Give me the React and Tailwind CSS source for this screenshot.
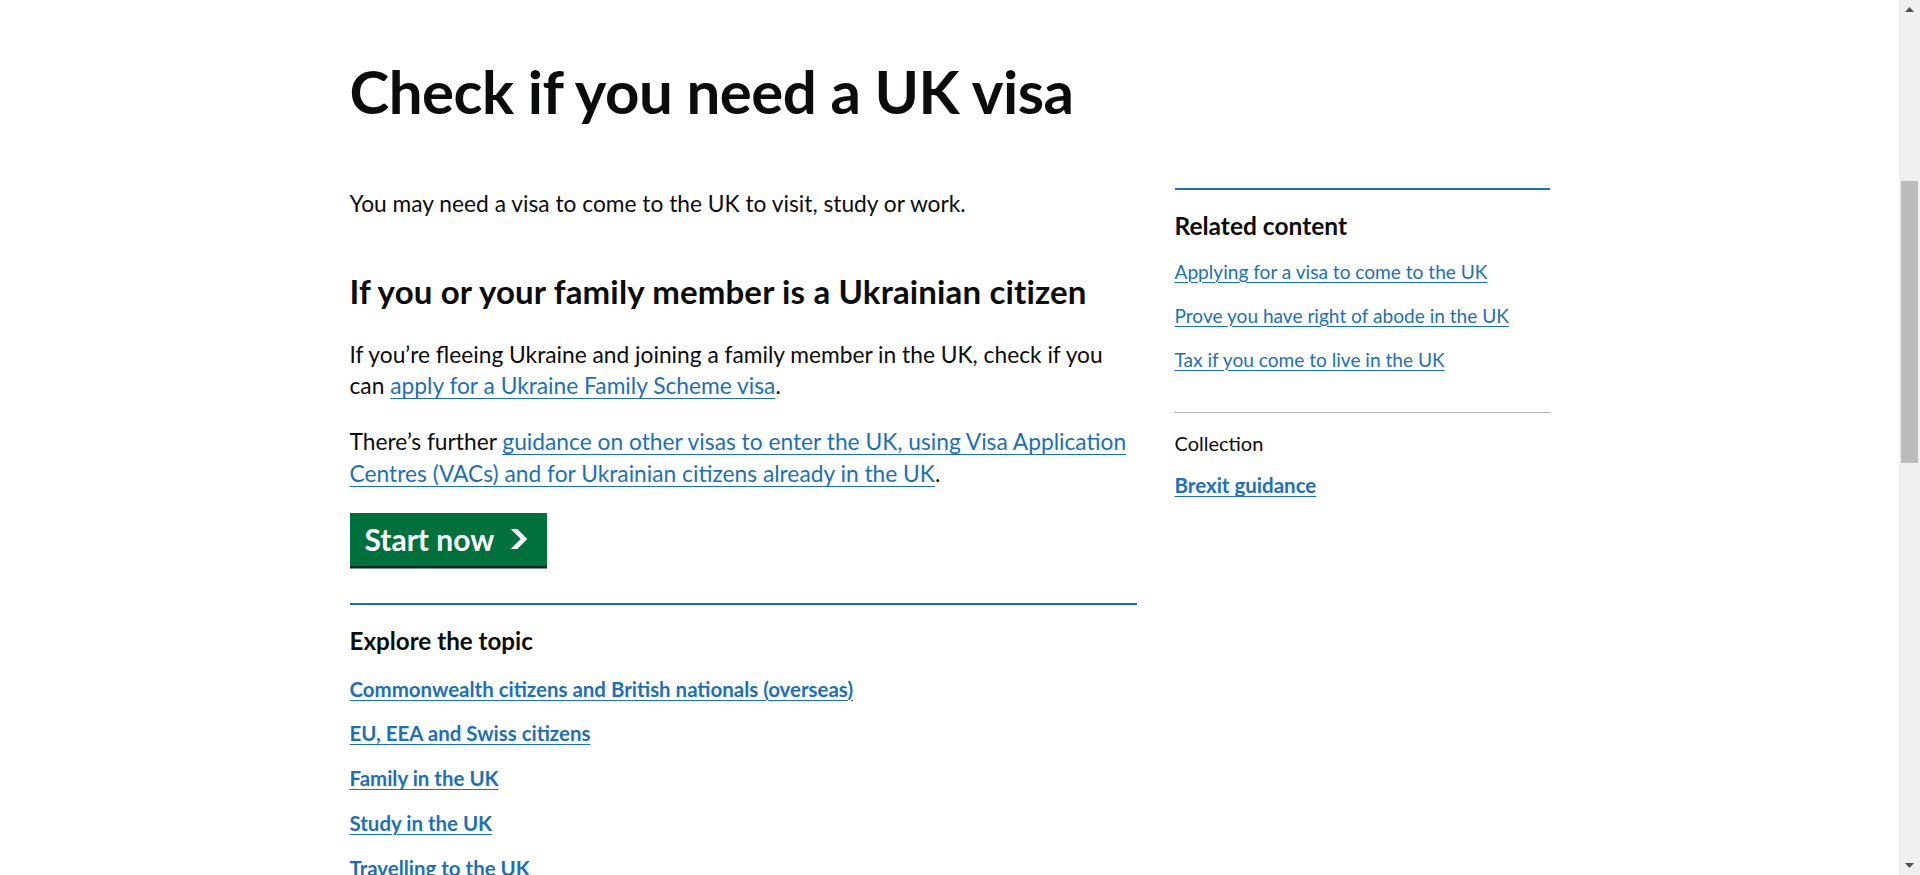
import React from 'react';

const font = { fontFamily: 'Lato, "Noto Sans", sans-serif' };

const exploreLinks = [
  'Commonwealth citizens and British nationals (overseas)',
  'EU, EEA and Swiss citizens',
  'Family in the UK',
  'Study in the UK',
  'Travelling to the UK',
];

const relatedLinks = [
  'Applying for a visa to come to the UK',
  'Prove you have right of abode in the UK',
  'Tax if you come to live in the UK',
];

const linkClass =
  'text-[#1d70b8] underline decoration-[1.25px] underline-offset-[0.16em]';

const StartButton = () => (
  <a
    href="#"
    className="inline-flex h-[53px] w-[197px] items-center bg-[#00703c] pl-[15px] text-[30px] font-bold leading-none text-white shadow-[0_2.5px_0_#002d18]"
  >
    Start now
    <svg className="ml-[16px]" width="18" height="20" viewBox="0 0 33 40" aria-hidden="true">
      <path fill="currentColor" d="M0 0h13l20 20-20 20H0l20-20z" />
    </svg>
  </a>
);

const Scrollbar = () => (
  <div className="relative h-full w-[21px] shrink-0 bg-[#f0f0f0]">
    <svg className="absolute left-[6px] top-[7px]" width="9" height="5" viewBox="0 0 9 5">
      <path d="M0 5 4.5 0 9 5z" fill="#505050" />
    </svg>
    <div className="absolute left-[2px] top-[181px] h-[282px] w-[17px] bg-[#bcbcbc]" />
    <svg className="absolute bottom-[7px] left-[6px]" width="9" height="5" viewBox="0 0 9 5">
      <path d="M0 0h9L4.5 5z" fill="#505050" />
    </svg>
  </div>
);

export default function App() {
  return (
    <div className="flex h-[875px] w-full overflow-hidden bg-white text-[#0b0c0c]" style={font}>
      <div className="min-w-0 flex-1">
        <div className="mx-auto w-[1200px]">
          <h1 className="mt-[60px] mb-[65px] text-[60px] font-bold leading-[62.5px] tracking-[-0.5px]">
            Check if you need a UK visa
          </h1>

          <div className="grid grid-cols-[787.5px_375px] gap-x-[37.5px]">
            <div>
              <p className="text-[22.75px] leading-[31.25px]">
                You may need a visa to come to the UK to visit, study or work.
              </p>

              <h2 className="mt-[54px] text-[33px] font-bold leading-[37.5px] tracking-[0.15px]">
                If you or your family member is a Ukrainian citizen
              </h2>

              <p className="mt-[28.5px] whitespace-nowrap text-[22.75px] leading-[31.25px]">
                If you’re fleeing Ukraine and joining a family member in the UK, check if you
                <br />
                can <a href="#" className={linkClass}>apply for a Ukraine Family Scheme visa</a>.
              </p>

              <p className="mt-[25px] whitespace-nowrap text-[22.75px] leading-[31.25px]">
                There’s further{' '}
                <a href="#" className={linkClass}>
                  guidance on other visas to enter the UK, using Visa Application
                  <br />
                  Centres (VACs) and for Ukrainian citizens already in the UK
                </a>
                .
              </p>

              <div className="mt-[24px]">
                <StartButton />
              </div>

              <div className="mt-[37.5px] border-t-[2.5px] border-[#1d70b8] pt-[20px]">
                <h2 className="text-[24.2px] font-bold leading-[31.25px]">Explore the topic</h2>
                <ul className="mt-[20px]">
                  {exploreLinks.map((l) => (
                    <li key={l} className="mb-[19.75px] text-[20.45px] leading-[25px]">
                      <a href="#" className={`${linkClass} font-bold`}>
                        {l}
                      </a>
                    </li>
                  ))}
                </ul>
              </div>
            </div>

            <aside>
              <div className="border-t-[2.5px] border-[#1d70b8] pt-[20px]">
                <h2 className="text-[24.5px] font-bold leading-[31.25px]">Related content</h2>
                <ul className="mt-[18px]">
                  {relatedLinks.map((l) => (
                    <li key={l} className="mb-[19px] text-[19.1px] leading-[25px]">
                      <a href="#" className={linkClass}>
                        {l}
                      </a>
                    </li>
                  ))}
                </ul>
              </div>
              <div className="mt-[40px] border-t border-[#b1b4b6] pt-[18px]">
                <p className="text-[20px] leading-[25px]">Collection</p>
                <a href="#" className={`${linkClass} mt-[17.5px] inline-block text-[20.5px] font-bold leading-[25px]`}>
                  Brexit guidance
                </a>
              </div>
            </aside>
          </div>
        </div>
      </div>
      <Scrollbar />
    </div>
  );
}
